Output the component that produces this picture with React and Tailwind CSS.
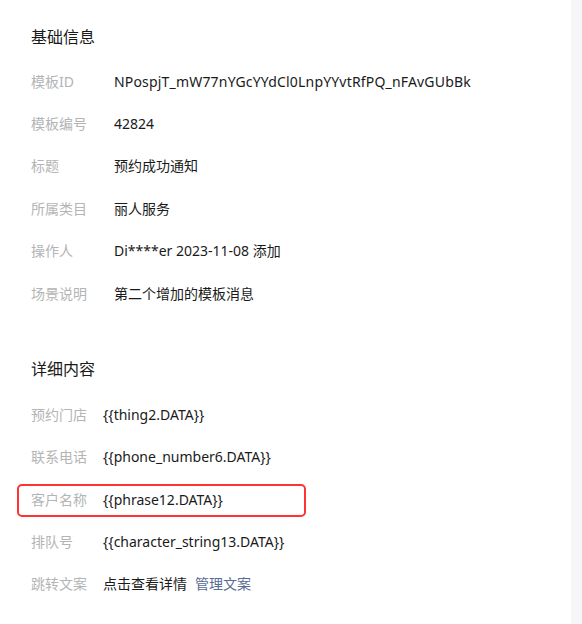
export default function App() {
  const font = { fontFamily: '"Noto Sans", "Noto Sans CJK SC", sans-serif' };
  const basic = [
    ["模板ID", "NPospjT_mW77nYGcYYdCl0LnpYYvtRfPQ_nFAvGUbBk", true],
    ["模板编号", "42824"],
    ["标题", "预约成功通知"],
    ["所属类目", "丽人服务"],
    ["操作人", "Di****er 2023-11-08 添加"],
    ["场景说明", "第二个增加的模板消息"],
  ];
  const detail = [
    ["预约门店", "{{thing2.DATA}}"],
    ["联系电话", "{{phone_number6.DATA}}"],
    ["客户名称", "{{phrase12.DATA}}", true],
    ["排队号", "{{character_string13.DATA}}"],
  ];
  return (
    <div className="flex w-[582px] h-[624px] bg-white overflow-hidden" style={font}>
      <div className="flex-1 flex flex-col pl-[31px] pt-[25px]">
        <div className="h-[24px] leading-[24px] text-[16px] text-[#1a1a1a] mb-[11px]">基础信息</div>
        {basic.map(([k, v, wide]) => (
          <div key={k} className="h-[42.4px] flex items-center text-[14px]">
            <div className="w-[83px] shrink-0 text-[#b4b4b4]">{k}</div>
            <div className={wide ? "text-[#1a1a1a] tracking-[0.18px]" : "text-[#1a1a1a]"}>{v}</div>
          </div>
        ))}
        <div className="h-[24px] leading-[24px] text-[16px] text-[#1a1a1a] mt-[43px] mb-[12px]">详细内容</div>
        {detail.map(([k, v, hl]) => (
          <div key={k} className="relative h-[42.4px] flex items-center text-[14px]">
            {hl && (
              <div className="absolute left-[-14px] top-[6px] w-[289px] h-[33px] border-2 border-[#ff3333] rounded-[5px]" />
            )}
            <div className="w-[72px] shrink-0 text-[#b4b4b4]">{k}</div>
            <div className="text-[#1a1a1a]">{v}</div>
          </div>
        ))}
        <div className="h-[42px] flex items-center text-[14px]">
          <div className="w-[72px] shrink-0 text-[#b4b4b4]">跳转文案</div>
          <div className="text-[#1a1a1a]">点击查看详情</div>
          <div className="ml-[8px] text-[#576b95]">管理文案</div>
        </div>
      </div>
      <div className="w-[11px] shrink-0 bg-[#f6f6f8]" />
    </div>
  );
}
